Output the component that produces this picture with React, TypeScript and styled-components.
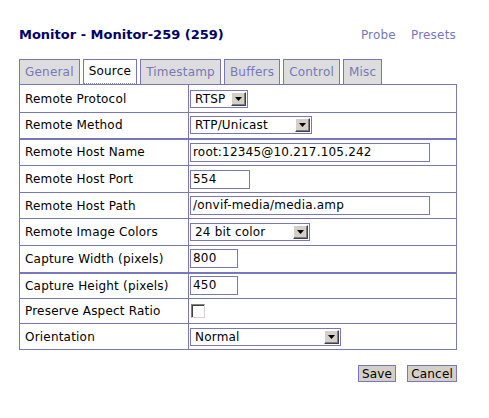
import React from "react";
import styled, { createGlobalStyle } from "styled-components";

const GlobalStyle = createGlobalStyle`
  body {
    margin: 0;
    background: #ffffff;
    font-family: "DejaVu Sans", Verdana, sans-serif;
    color: #000000;
  }
`;

const Page = styled.div`
  width: 438px;
  padding: 26px 0 0 19px;
`;

const Header = styled.div`
  display: flex;
  justify-content: space-between;
  align-items: baseline;
  height: 33px;
`;

const Title = styled.h2`
  margin: 0;
  font-size: 13px;
  font-weight: bold;
  color: #000066;
  line-height: 17px;
`;

const Links = styled.div`
  display: flex;
  gap: 15px;
  padding-right: 1px;
`;

const HeadLink = styled.a`
  font-size: 12px;
  letter-spacing: 0.2px;
  color: #7777bb;
  text-decoration: none;
  cursor: pointer;
`;

const TabList = styled.ul`
  display: flex;
  gap: 3px;
  margin: 0;
  padding: 0;
  list-style: none;
`;

const Tab = styled.li<{ $active?: boolean }>`
  box-sizing: border-box;
  height: 25px;
  display: flex;
  align-items: center;
  padding: 0 5px 1px 5px;
  border: 1px solid #7777bb;
  border-bottom: ${(p) => (p.$active ? "1px dotted #8a8a8a" : "none")};
  background: ${(p) => (p.$active ? "#ffffff" : "#dddddd")};
  color: ${(p) => (p.$active ? "#000000" : "#7777bb")};
  font-size: 12px;
  letter-spacing: 0.2px;
  cursor: pointer;
`;

const Table = styled.table`
  border-collapse: collapse;
  width: 438px;
  font-size: 12px;
  letter-spacing: 0.2px;
`;

const Row = styled.tr<{ $h: number; $thick?: boolean }>`
  height: ${(p) => p.$h}px;
  & > td {
    border-top: ${(p) => (p.$thick ? "2px" : "1px")} solid #7777bb;
  }
`;

const Label = styled.td`
  width: 158px;
  padding: 0 5px;
  border: 1px solid #7777bb;
  vertical-align: middle;
  white-space: nowrap;
`;

const Field = styled.td`
  padding: 0 1px;
  border: 1px solid #7777bb;
  vertical-align: middle;
`;

const TextInput = styled.div<{ $w: number }>`
  box-sizing: border-box;
  width: ${(p) => p.$w}px;
  height: 19px;
  border: 1px solid #7777bb;
  padding: 0 2px;
  font-size: 12px;
  line-height: 17px;
  background: #ffffff;
  white-space: nowrap;
  overflow: hidden;
`;

const SelectBox = styled.div<{ $w: number }>`
  box-sizing: border-box;
  width: ${(p) => p.$w}px;
  height: 18px;
  display: flex;
  align-items: center;
  justify-content: space-between;
  border: 1px solid #7777bb;
  padding: 0 1px 0 4px;
  font-size: 12px;
  background: #ffffff;
`;

const ArrowButton = styled.span`
  box-sizing: border-box;
  width: 15px;
  height: 14px;
  display: flex;
  align-items: center;
  justify-content: center;
  background: #d4d0c8;
  border-top: 1px solid #ffffff;
  border-left: 1px solid #ffffff;
  border-right: 1px solid #404040;
  border-bottom: 1px solid #404040;
  box-shadow: inset -1px -1px 0 #808080;
`;

const CheckBox = styled.span`
  box-sizing: border-box;
  display: block;
  width: 14px;
  height: 14px;
  margin-left: 1px;
  background: #ffffff;
  border-top: 1px solid #808080;
  border-left: 1px solid #808080;
  border-right: 1px solid #d4d0c8;
  border-bottom: 1px solid #d4d0c8;
  box-shadow: inset 1px 1px 0 #404040;
`;

const Actions = styled.div`
  display: flex;
  justify-content: flex-end;
  gap: 11px;
  margin-top: 15px;
`;

const Button = styled.button`
  box-sizing: border-box;
  height: 17px;
  padding: 0 3px;
  border: 1px solid #7777bb;
  background: #d4d0c8;
  font-family: "DejaVu Sans", Verdana, sans-serif;
  font-size: 12px;
  letter-spacing: 0.2px;
  line-height: 14px;
  color: #000000;
  cursor: pointer;
`;

const Select: React.FC<{ value: string; width: number }> = ({ value, width }) => (
  <SelectBox $w={width}>
    <span>{value}</span>
    <ArrowButton>
      <svg width="7" height="4" viewBox="0 0 7 4">
        <path d="M0 0h7L3.5 4z" fill="#000" />
      </svg>
    </ArrowButton>
  </SelectBox>
);

type FieldDef =
  | { label: string; kind: "select"; value: string; w: number; h: number; thick?: boolean }
  | { label: string; kind: "text"; value: string; w: number; h: number; thick?: boolean }
  | { label: string; kind: "check"; h: number; thick?: boolean };

const fields: FieldDef[] = [
  { label: "Remote Protocol", kind: "select", value: "RTSP", w: 58, h: 28 },
  { label: "Remote Method", kind: "select", value: "RTP/Unicast", w: 122, h: 26 },
  { label: "Remote Host Name", kind: "text", value: "root:12345@10.217.105.242", w: 240, h: 27, thick: true },
  { label: "Remote Host Port", kind: "text", value: "554", w: 60, h: 27 },
  { label: "Remote Host Path", kind: "text", value: "/onvif-media/media.amp", w: 240, h: 26 },
  { label: "Remote Image Colors", kind: "select", value: "24 bit color", w: 120, h: 27 },
  { label: "Capture Width (pixels)", kind: "text", value: "800", w: 48, h: 27 },
  { label: "Capture Height (pixels)", kind: "text", value: "450", w: 48, h: 26, thick: true },
  { label: "Preserve Aspect Ratio", kind: "check", h: 25 },
  { label: "Orientation", kind: "select", value: "Normal", w: 151, h: 26 },
];

const tabs = ["General", "Source", "Timestamp", "Buffers", "Control", "Misc"];

export default function App() {
  return (
    <>
      <GlobalStyle />
      <Page>
        <Header>
          <Title>Monitor - Monitor-259 (259)</Title>
          <Links>
            <HeadLink>Probe</HeadLink>
            <HeadLink>Presets</HeadLink>
          </Links>
        </Header>
        <TabList>
          {tabs.map((t) => (
            <Tab key={t} $active={t === "Source"}>
              {t}
            </Tab>
          ))}
        </TabList>
        <Table>
          <tbody>
            {fields.map((f) => (
              <Row key={f.label} $h={f.h} $thick={f.thick}>
                <Label>{f.label}</Label>
                <Field>
                  {f.kind === "select" && <Select value={f.value} width={f.w} />}
                  {f.kind === "text" && <TextInput $w={f.w}>{f.value}</TextInput>}
                  {f.kind === "check" && <CheckBox />}
                </Field>
              </Row>
            ))}
          </tbody>
        </Table>
        <Actions>
          <Button>Save</Button>
          <Button>Cancel</Button>
        </Actions>
      </Page>
    </>
  );
}
